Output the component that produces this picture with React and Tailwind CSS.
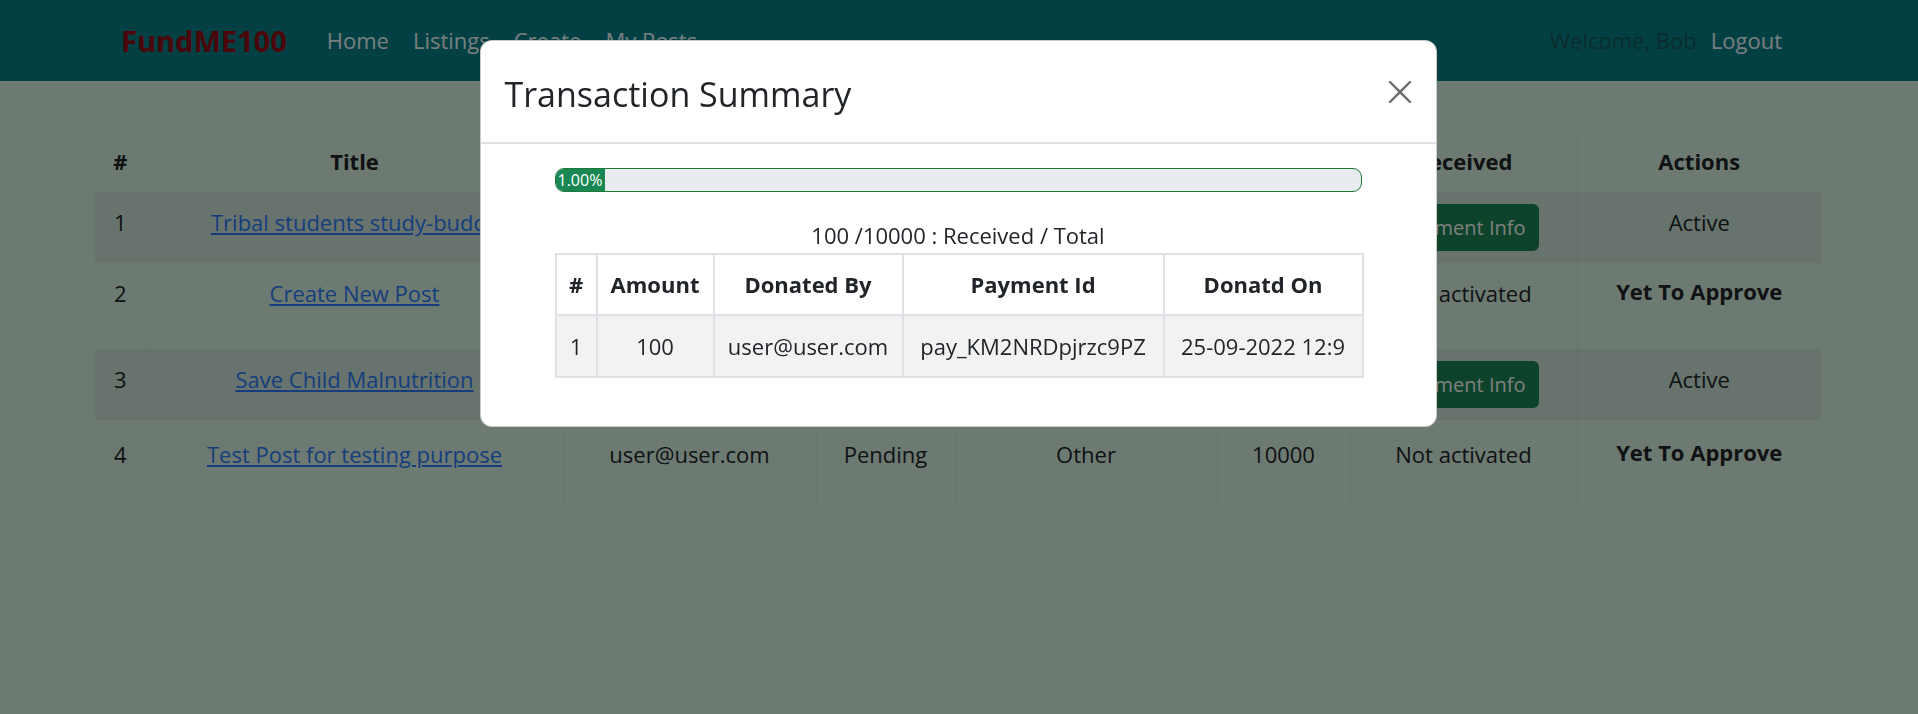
import { X } from 'lucide-react'

const posts = [
  { id: 1, title: 'Tribal students study-buddy', by: 'user@user.com', status: 'Approved', cat: 'Education', target: '10000', received: 'info', action: 'Active' },
  { id: 2, title: 'Create New Post', by: 'user@user.com', status: 'Pending', cat: 'Other', target: '10000', received: 'Not activated', action: 'Yet To Approve' },
  { id: 3, title: 'Save Child Malnutrition', by: 'user@user.com', status: 'Approved', cat: 'Health', target: '10000', received: 'info', action: 'Active' },
  { id: 4, title: 'Test Post for testing purpose', by: 'user@user.com', status: 'Pending', cat: 'Other', target: '10000', received: 'Not activated', action: 'Yet To Approve' },
]

const rowStyles = [
  'h-[71px] [&>td]:pt-[14px]',
  'h-[86px] [&>td]:pt-[14px]',
  'h-[71px] [&>td]:pt-[14px]',
  'h-[84px] [&>td]:pt-[18px]',
]

const donations = [
  { id: 1, amount: 100, by: 'user@user.com', payment: 'pay_KM2NRDpjrzc9PZ', on: '25-09-2022 12:9' },
]

const App = () => {
  return (
    <div className="relative min-h-screen bg-[#daf4e4] text-[#212529] font-['Open_Sans',sans-serif]">
      {/* Navbar */}
      <nav className="h-[81px] bg-[#048088]">
        <div className="flex items-center h-full pl-[121px] pr-[124px]">
          <a className="text-[29px] font-bold text-[#960c14] mr-[28px]">FundME100</a>
          <div className="flex items-center text-[22px] text-[#f0ffff]">
            <a className="px-[12px]">Home</a>
            <a className="px-[12px]">Listings</a>
            <a className="px-[12px]">Create</a>
            <a className="px-[12px]">My Posts</a>
          </div>
          <div className="ml-auto flex items-center text-[22px]">
            <span className="text-[#16585c] mr-[2px]">Welcome, Bob</span>
            <a className="px-[12px] text-[#f0ffff]">Logout</a>
          </div>
        </div>
      </nav>

      {/* Posts table */}
      <div className="pl-[95px] pr-[97px] pt-[52px]">
        <table className="w-full table-fixed border-collapse text-[22px] text-center">
          <colgroup>
            <col className="w-[51px]" />
            <col className="w-[417px]" />
            <col className="w-[253px]" />
            <col className="w-[139px]" />
            <col className="w-[262px]" />
            <col className="w-[133px]" />
            <col className="w-[227px]" />
            <col className="w-[244px]" />
          </colgroup>
          <thead>
            <tr className="h-[59px] font-bold">
              <th className="align-top pt-[12px] border-r border-black/[0.04]">#</th>
              <th className="align-top pt-[12px] border-r border-black/[0.04]">Title</th>
              <th className="align-top pt-[12px] border-r border-black/[0.04]">Created By</th>
              <th className="align-top pt-[12px] border-r border-black/[0.04]">Status</th>
              <th className="align-top pt-[12px] border-r border-black/[0.04]">Category</th>
              <th className="align-top pt-[12px] border-r border-black/[0.04]">Target</th>
              <th className="align-top pt-[12px] border-r border-black/[0.04]">Received</th>
              <th className="align-top pt-[12px]">Actions</th>
            </tr>
          </thead>
          <tbody>
            {posts.map((p, i) => (
              <tr key={p.id} className={`${rowStyles[i]} ${i % 2 === 0 ? 'bg-black/5' : ''}`}>
                <td className="align-top border-r border-black/[0.04]">{p.id}</td>
                <td className="align-top border-r border-black/[0.04]">
                  <a className="text-[#2c7dfd] underline">{p.title}</a>
                </td>
                <td className="align-top border-r border-black/[0.04]">{p.by}</td>
                <td className="align-top border-r border-black/[0.04]">{p.status}</td>
                <td className="align-top border-r border-black/[0.04]">{p.cat}</td>
                <td className="align-top border-r border-black/[0.04]">{p.target}</td>
                <td className="align-top border-r border-black/[0.04]">
                  {p.received === 'info' ? (
                    <button className="-mt-[2px] h-[47px] w-[151px] rounded-[6px] bg-[#198754] text-white text-[20px]">
                      Payment Info
                    </button>
                  ) : (
                    p.received
                  )}
                </td>
                <td className={`align-top ${p.action === 'Active' ? '' : 'font-bold'}`}>
                  <span className={p.action === 'Active' ? '' : 'relative -top-[2px]'}>{p.action}</span>
                </td>
              </tr>
            ))}
          </tbody>
        </table>
      </div>

      {/* Modal backdrop */}
      <div className="fixed inset-0 bg-black/50" />

      {/* Modal */}
      <div className="absolute inset-x-0 top-[40px] flex justify-center">
        <div className="w-[957px] -translate-x-[1px] bg-white rounded-[12px] border border-black/20 overflow-hidden">
          <div className="h-[103px] flex items-center justify-between pl-[24px] pr-[16px] border-b-2 border-[#dee2e6]">
            <h4 className="text-[34px] font-medium leading-[40px] mt-[4px]">Transaction Summary</h4>
            <button className="w-[40px] h-[40px] flex items-center justify-center">
              <X className="w-[42px] h-[42px] text-[#6b6b6b]" strokeWidth={1.4} />
            </button>
          </div>
          <div className="px-[74px] pt-[24px] pb-[48px]">
            <div className="h-[24px] flex rounded-[9px] border border-[#1f7a35] bg-[#e9ecef] overflow-hidden">
              <div className="w-[49px] bg-[#198754] text-white text-[16px] leading-[22px] pl-[2px]">1.00%</div>
            </div>
            <p className="mt-[25px] h-[36px] leading-[36px] text-center text-[22px]">100 /10000 : Received / Total</p>
            <table className="w-full table-fixed border-collapse text-[22px] text-center">
              <colgroup>
                <col className="w-[41px]" />
                <col className="w-[117px]" />
                <col className="w-[189px]" />
                <col className="w-[261px]" />
                <col className="w-[199px]" />
              </colgroup>
              <thead>
                <tr className="h-[61px] font-bold">
                  <th className="border-2 border-[#dee2e6]">#</th>
                  <th className="border-2 border-[#dee2e6]">Amount</th>
                  <th className="border-2 border-[#dee2e6]">Donated By</th>
                  <th className="border-2 border-[#dee2e6]">Payment Id</th>
                  <th className="border-2 border-[#dee2e6]">Donatd On</th>
                </tr>
              </thead>
              <tbody>
                {donations.map((d) => (
                  <tr key={d.id} className="h-[62px] bg-[#f2f2f2]">
                    <td className="border-2 border-[#dee2e6]">{d.id}</td>
                    <td className="border-2 border-[#dee2e6]">{d.amount}</td>
                    <td className="border-2 border-[#dee2e6] whitespace-nowrap">{d.by}</td>
                    <td className="border-2 border-[#dee2e6] whitespace-nowrap">{d.payment}</td>
                    <td className="border-2 border-[#dee2e6] whitespace-nowrap">{d.on}</td>
                  </tr>
                ))}
              </tbody>
            </table>
          </div>
        </div>
      </div>
    </div>
  )
}

export default App
